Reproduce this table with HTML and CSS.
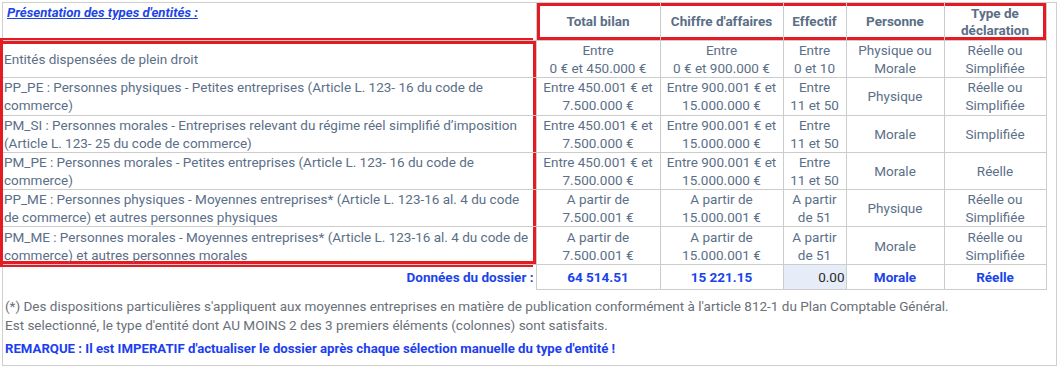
FILE: index.html
```html
<!DOCTYPE html>
<html lang="fr">
<head>
<meta charset="utf-8">
<title>Présentation des types d'entités</title>
<link rel="stylesheet" href="styles.css">
</head>
<body>
<div class="panel">
  <table class="grid">
    <colgroup>
      <col class="c-label">
      <col class="c-bilan">
      <col class="c-ca">
      <col class="c-eff">
      <col class="c-pers">
      <col class="c-type">
    </colgroup>
    <thead>
      <tr class="head">
        <th class="title-cell"><span class="title">Présentation des types d'entités :</span></th>
        <th class="hl-h hl-first">Total bilan</th>
        <th class="hl-h">Chiffre d'affaires</th>
        <th class="hl-h">Effectif</th>
        <th class="hl-h">Personne</th>
        <th class="hl-h hl-last">Type de déclaration</th>
      </tr>
    </thead>
    <tbody>
      <tr>
        <td class="label hl-l hl-top">Entités dispensées de plein droit</td>
        <td>Entre<br>0 € et 450.000 €</td>
        <td>Entre<br>0 € et 900.000 €</td>
        <td>Entre<br>0 et 10</td>
        <td>Physique ou<br>Morale</td>
        <td>Réelle ou<br>Simplifiée</td>
      </tr>
      <tr>
        <td class="label hl-l">PP_PE : Personnes physiques - Petites entreprises (Article L. 123- 16 du code de<br>commerce)</td>
        <td>Entre 450.001 € et<br>7.500.000 €</td>
        <td>Entre 900.001 € et<br>15.000.000 €</td>
        <td>Entre<br>11 et 50</td>
        <td>Physique</td>
        <td>Réelle ou<br>Simplifiée</td>
      </tr>
      <tr>
        <td class="label hl-l">PM_SI : Personnes morales - Entreprises relevant du régime réel simplifié d’imposition<br>(Article L. 123- 25 du code de commerce)</td>
        <td>Entre 450.001 € et<br>7.500.000 €</td>
        <td>Entre 900.001 € et<br>15.000.000 €</td>
        <td>Entre<br>11 et 50</td>
        <td>Morale</td>
        <td>Simplifiée</td>
      </tr>
      <tr>
        <td class="label hl-l">PM_PE : Personnes morales - Petites entreprises (Article L. 123- 16 du code de<br>commerce)</td>
        <td>Entre 450.001 € et<br>7.500.000 €</td>
        <td>Entre 900.001 € et<br>15.000.000 €</td>
        <td>Entre<br>11 et 50</td>
        <td>Morale</td>
        <td>Réelle</td>
      </tr>
      <tr>
        <td class="label hl-l">PP_ME : Personnes physiques - Moyennes entreprises* (Article L. 123-16 al. 4 du code<br>de commerce) et autres personnes physiques</td>
        <td>A partir de<br>7.500.001 €</td>
        <td>A partir de<br>15.000.001 €</td>
        <td>A partir<br>de 51</td>
        <td>Physique</td>
        <td>Réelle ou<br>Simplifiée</td>
      </tr>
      <tr>
        <td class="label hl-l hl-bottom">PM_ME : Personnes morales - Moyennes entreprises* (Article L. 123-16 al. 4 du code de<br>commerce) et autres personnes morales</td>
        <td>A partir de<br>7.500.001 €</td>
        <td>A partir de<br>15.000.001 €</td>
        <td>A partir<br>de 51</td>
        <td>Morale</td>
        <td>Réelle ou<br>Simplifiée</td>
      </tr>
      <tr class="data">
        <td class="data-label">Données du dossier :</td>
        <td>64 514.51</td>
        <td>15 221.15</td>
        <td class="input-cell"><span class="input">0.00</span></td>
        <td>Morale</td>
        <td>Réelle</td>
      </tr>
    </tbody>
  </table>
  <div class="notes">
    <p class="note">(*) Des dispositions particulières s'appliquent aux moyennes entreprises en matière de publication conformément à l'article 812-1 du Plan Comptable Général.</p>
    <p class="note">Est selectionné, le type d'entité dont AU MOINS 2 des 3 premiers éléments (colonnes) sont satisfaits.</p>
    <p class="remark">REMARQUE : Il est IMPERATIF d'actualiser le dossier après chaque sélection manuelle du type d'entité !</p>
  </div>
</div>
</body>
</html>
```

FILE: styles.css
```css
html, body {
  margin: 0;
  padding: 0;
  background: #ffffff;
}

body {
  font-family: Roboto, "Liberation Sans", Arial, sans-serif;
  font-size: 13.5px;
  color: #5b6f88;
}

.panel {
  box-sizing: border-box;
  margin: 2px 4px 0 2px;
  width: 1055px;
  height: 364px;
  border: 1px solid #cfcfcf;
}

.grid {
  border-collapse: collapse;
  table-layout: fixed;
  width: 1043px;
}

.c-label { width: 533px; }
.c-bilan { width: 124px; }
.c-ca { width: 123px; }
.c-eff { width: 63px; }
.c-pers { width: 98px; }
.c-type { width: 102px; }

.grid th,
.grid td {
  border: 1px solid #cccccc;
  padding: 0 2px;
  line-height: 18px;
  text-align: center;
  vertical-align: middle;
  font-weight: normal;
}

.grid tr > :first-child {
  border-left: none;
}

.grid thead th {
  border-top: none;
}

.head th {
  height: 36px;
  font-weight: bold;
  color: #5a6e86;
  line-height: 17px;
}

.grid tbody tr {
  height: 37.3px;
}

.grid th.title-cell {
  text-align: left;
  vertical-align: top;
  padding: 1px 4px 0;
}

.title {
  color: #1d45e6;
  font-style: italic;
  font-weight: bold;
  font-size: 13.2px;
  text-decoration: underline;
}

.grid td.label {
  text-align: left;
  white-space: nowrap;
  padding: 0 0 0 1px;
}

/* red highlight boxes */
.hl-h {
  box-shadow: inset 0 3px 0 #e41b23, inset 0 -3px 0 #e41b23;
}
.hl-h.hl-first {
  box-shadow: inset 0 3px 0 #e41b23, inset 0 -3px 0 #e41b23, inset 3px 0 0 #e41b23;
}
.hl-h.hl-last {
  box-shadow: inset 0 3px 0 #e41b23, inset 0 -3px 0 #e41b23, inset -3px 0 0 #e41b23;
}
.hl-l {
  box-shadow: -3px 0 0 #e41b23, inset -3px 0 0 #e41b23;
}
.hl-l.hl-top {
  box-shadow: -3px 0 0 #e41b23, inset -3px 0 0 #e41b23, inset 0 3px 0 #e41b23, -3px -3px 0 #e41b23;
}
.hl-l.hl-bottom {
  box-shadow: -3px 0 0 #e41b23, inset -3px 0 0 #e41b23, inset 0 -3px 0 #e41b23, -3px 3px 0 #e41b23;
}

.grid tr.data {
  height: 25px;
}

.data td {
  font-weight: bold;
  font-size: 13.5px;
  color: #1a44ea;
}

.grid td.data-label {
  border: none;
  border-right: 1px solid #cccccc;
  text-align: right;
  padding-right: 2px;
}

.grid td.input-cell {
  background: #e6ecf8;
  padding: 0 1px 0 0;
  text-align: right;
}

.input {
  font-weight: normal;
  font-size: 13.5px;
  color: #2a2a2a;
}

.notes {
  padding: 7px 0 0 2px;
}

.note {
  margin: 0;
  line-height: 19px;
  font-size: 13.5px;
  color: #6a7078;
}

.remark {
  margin: 4px 0 0;
  line-height: 19px;
  font-size: 13.2px;
  font-weight: bold;
  color: #1c3ef0;
}
```
